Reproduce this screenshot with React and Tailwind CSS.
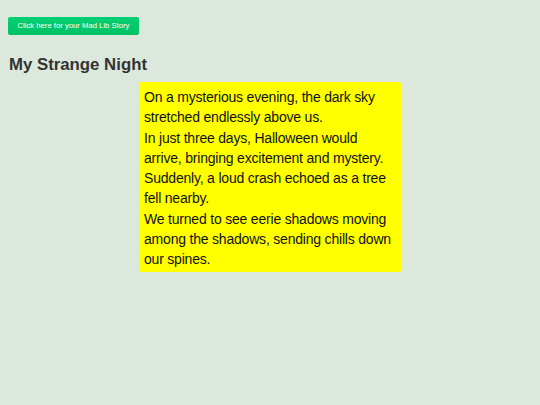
export default function App() {
  return (
    <div
      className="min-h-[405px] w-full bg-[#dde8dd] px-2 pt-[17px]"
      style={{ fontFamily: '"Liberation Sans", Arial, sans-serif' }}
    >
      <button className="block h-[18px] w-[131px] rounded-[2px] bg-gradient-to-b from-[#00d072] to-[#00c266] text-[7.7px] leading-[18px] text-white">
        Click here for your Mad Lib Story
      </button>
      <h1 className="mt-[18px] pl-px text-[16.8px] font-bold leading-[24px] text-[#333333]">
        My Strange Night
      </h1>
      <div className="mx-auto mt-[5px] w-[262px] rounded-[2px] bg-[#ffff00] px-[5px] pb-[3px] pt-[5px] text-[14px] leading-[20.25px] tracking-[-0.2px] text-[#111111]">
        <p>On a mysterious evening, the dark sky stretched endlessly above us.</p>
        <p>In just three days, Halloween would arrive, bringing excitement and mystery.</p>
        <p>Suddenly, a loud crash echoed as a tree fell nearby.</p>
        <p>We turned to see eerie shadows moving among the shadows, sending chills down our spines.</p>
      </div>
    </div>
  );
}
